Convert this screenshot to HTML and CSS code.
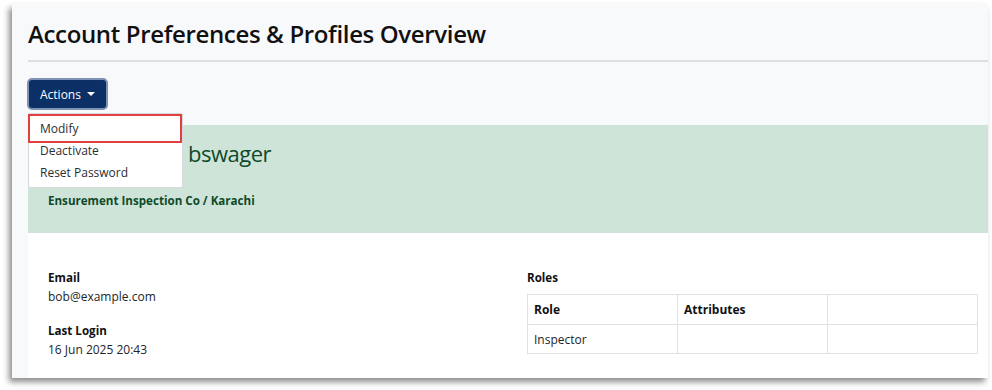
FILE: index.html
```html
<!DOCTYPE html>
<html>
<head>
<meta charset="utf-8">
<link rel="stylesheet" href="styles.css">
</head>
<body>
<div class="window">
  <h1 class="title">Account Preferences &amp; Profiles Overview</h1>
  <hr class="rule">
  <div class="actions">
    <button class="btn">Actions <span class="caret"></span></button>
    <ul class="menu">
      <li class="item item-active">Modify</li>
      <li class="item">Deactivate</li>
      <li class="item">Reset Password</li>
    </ul>
  </div>
  <section class="banner">
    <h2 class="name">bswager</h2>
    <p class="org">Ensurement Inspection Co / Karachi</p>
  </section>
  <section class="details">
    <div class="col">
      <div class="field">
        <div class="label">Email</div>
        <div class="value">bob@example.com</div>
      </div>
      <div class="field">
        <div class="label">Last Login</div>
        <div class="value">16 Jun 2025 20:43</div>
      </div>
    </div>
    <div class="col">
      <div class="label">Roles</div>
      <table class="roles">
        <thead>
          <tr><th>Role</th><th>Attributes</th><th></th></tr>
        </thead>
        <tbody>
          <tr><td>Inspector</td><td></td><td></td></tr>
        </tbody>
      </table>
    </div>
  </section>
</div>
</body>
</html>
```
FILE: styles.css
```css
* { box-sizing: border-box; }
html, body { margin: 0; padding: 0; }
body {
  background: #ffffff;
  padding: 4px 4px 12px 12px;
  font-family: "Open Sans", "Noto Sans", sans-serif;
  color: #212529;
}
.window {
  width: 976px;
  height: 374px;
  background: #f8f9fa;
  overflow: hidden;
  padding: 15px 0 0 16px;
  box-shadow: -3px 4px 6px rgba(0,0,0,0.45);
}
.title {
  margin: 0;
  font-size: 24px;
  font-weight: 600;
  line-height: 29px;
  color: #111;
  letter-spacing: -0.35px;
}
.rule {
  margin: 12px 0 0 0;
  border: 0;
  border-top: 2px solid #dcdfe3;
}
.actions {
  position: relative;
  margin-top: 16px;
  margin-left: -1px;
  height: 32px;
}
.btn {
  height: 32px;
  padding: 0 11px;
  background: #0c3066;
  color: #fff;
  border: 2px solid #7e93b3;
  border-radius: 5px;
  font-family: inherit;
  font-size: 12px;
  display: flex;
  align-items: center;
  gap: 6px;
  box-shadow: inset 0 0 0 1px #0c3066;
}
.caret {
  width: 0; height: 0;
  border-left: 4px solid transparent;
  border-right: 4px solid transparent;
  border-top: 4px solid #fff;
}
.menu {
  position: absolute;
  z-index: 2;
  left: 1px;
  top: 35px;
  width: 155px;
  margin: 0;
  padding: 4px 0 3px;
  list-style: none;
  background: #fff;
  border: 1px solid #d5d8dc;
  border-radius: 2px;
}
.item {
  position: relative;
  height: 22px;
  line-height: 22px;
  padding: 0 11px;
  font-size: 12px;
  color: #2b2f33;
}
.item-active::after {
  content: "";
  position: absolute;
  top: -4px;
  bottom: -3px;
  left: -1px;
  right: 0;
  border: 2px solid #e0403e;
}
.banner {
  margin-top: 15px;
  height: 108px;
  background: #cfe4d8;
  padding: 12px 20px 0;
  color: #0d4a2a;
}
.name {
  margin: 0;
  padding-left: 140px;
  font-size: 22px;
  font-weight: 500;
  line-height: 32px;
  letter-spacing: -0.5px;
  color: #0e4a29;
}
.org {
  margin: 24px 0 0;
  font-size: 11.6px;
  font-weight: 700;
  color: #0e4a29;
}
.details {
  background: #fff;
  height: 200px;
  display: grid;
  grid-template-columns: 479px 450px;
  padding: 36px 0 0 20px;
}
.label {
  font-size: 11.6px;
  font-weight: 700;
  color: #111;
  line-height: 18px;
}
.value {
  font-size: 12px;
  line-height: 19px;
  color: #212529;
}
.field + .field { margin-top: 16px; }
.roles {
  margin-top: 7px;
  width: 451px;
  border-collapse: collapse;
  font-size: 12px;
}
.roles th, .roles td {
  border: 1px solid #dee2e6;
  width: 150px;
  padding: 0 6px;
  text-align: left;
}
.roles th { height: 30px; font-weight: 700; color: #111; }
.roles td { height: 29px; }
```
